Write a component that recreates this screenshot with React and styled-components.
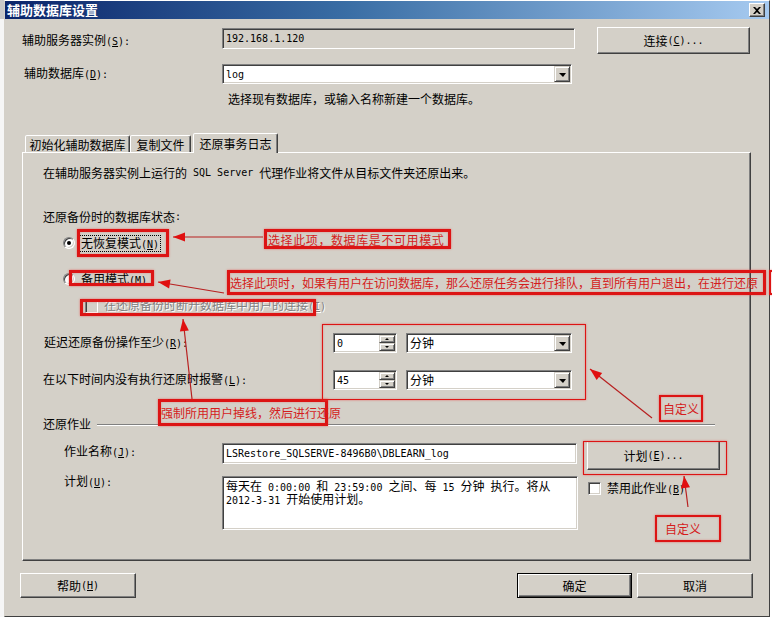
import React from "react";
import styled, { createGlobalStyle, css } from "styled-components";

const GlobalStyle = createGlobalStyle`
  html, body {
    margin: 0;
    padding: 0;
    background: #ffffff;
  }
`;

const FACE = "#d4d0c8";

const sunken = css`
  box-sizing: border-box;
  border: 1px solid;
  border-color: #808080 #ffffff #ffffff #808080;
  box-shadow: inset 1px 1px #404040, inset -1px -1px ${FACE};
`;

const raised = css`
  box-sizing: border-box;
  background: ${FACE};
  border: 1px solid;
  border-color: #ffffff #404040 #404040 #ffffff;
  box-shadow: inset -1px -1px #808080;
`;

const Page = styled.div`
  position: relative;
  width: 772px;
  height: 617px;
  overflow: hidden;
  display: flex;
  background: #ffffff;
`;

const BackStrip = styled.div`
  width: 4px;
  flex: none;
  background: linear-gradient(#c8c8c8 0 19px, #f6f6f6 19px);
`;

const Dialog = styled.div`
  width: 766px;
  height: 617px;
  flex: none;
  box-sizing: border-box;
  display: flex;
  flex-direction: column;
  background: ${FACE};
  border: 1px solid;
  border-color: #ffffff #404040 #404040 ${FACE};
  font-family: "Noto Sans CJK SC", "Liberation Sans", sans-serif;
  font-size: 12px;
  line-height: 14px;
  color: #000000;
`;

const TitleBar = styled.div`
  height: 18px;
  flex: none;
  display: flex;
  align-items: center;
  justify-content: space-between;
  padding: 0 4px 0 2px;
  background: linear-gradient(to right, #0a246a, #3a6ea5 45%, #a6caf0);
  color: #ffffff;
  font-weight: bold;
  font-size: 13px;
`;

const CloseBtn = styled.div`
  ${raised};
  width: 16px;
  height: 14px;
  display: flex;
  align-items: center;
  justify-content: center;
  box-shadow: inset -1px -1px #808080, inset 1px 1px ${FACE};
`;

const Body = styled.div`
  flex: 1;
  display: flex;
  flex-direction: column;
  padding: 0 16px 0 17px;
`;

const Row = styled.div`
  flex: none;
  display: flex;
  align-items: ${(p) => p.$align || "center"};
  height: ${(p) => p.$h}px;
  margin-top: ${(p) => p.$mt || 0}px;
  padding-left: ${(p) => p.$pl || 0}px;
  white-space: nowrap;
`;

const Label = styled.div`
  flex: none;
  box-sizing: border-box;
  width: ${(p) => p.$w}px;
  padding-left: ${(p) => p.$pl || 0}px;
  margin-top: ${(p) => p.$mt || 0}px;
  white-space: nowrap;
`;

const Field = styled.div`
  ${sunken};
  flex: none;
  display: flex;
  flex-direction: ${(p) => (p.$multi ? "column" : "row")};
  align-items: ${(p) => (p.$multi ? "flex-start" : "center")};
  align-self: ${(p) => p.$self || "auto"};
  width: ${(p) => p.$w}px;
  height: ${(p) => p.$h}px;
  margin-top: ${(p) => p.$mt || 0}px;
  margin-left: ${(p) => p.$ml || 0}px;
  padding: ${(p) => (p.$multi ? "2px 3px" : "1px 1px 1px 3px")};
  background: ${(p) => (p.$readonly ? FACE : "#ffffff")};
  line-height: 12px;
  white-space: nowrap;
`;

const FieldText = styled.div`
  flex: 1;
`;

const MemoLine = styled.div`
  height: 13px;
  line-height: 13px;
  white-space: nowrap;
`;

const DropBtn = styled.div`
  ${raised};
  flex: none;
  width: 16px;
  height: 16px;
  display: flex;
  align-items: center;
  justify-content: center;
  border-color: ${FACE} #404040 #404040 ${FACE};
  box-shadow: inset 1px 1px #ffffff, inset -1px -1px #808080;
  &::after {
    content: "";
    width: 0;
    height: 0;
    border-left: 4px solid transparent;
    border-right: 3px solid transparent;
    border-top: 4px solid #000000;
    margin-top: 1px;
  }
`;

const SpinCol = styled.div`
  flex: none;
  display: flex;
  flex-direction: column;
  width: 16px;
  height: 16px;
`;

const SpinBtn = styled.div`
  ${raised};
  height: 8px;
  display: flex;
  align-items: center;
  justify-content: center;
  border-color: ${FACE} #404040 #404040 ${FACE};
  box-shadow: inset 1px 1px #ffffff, inset -1px -1px #808080;
  &::after {
    content: "";
    width: 0;
    height: 0;
    border-left: 2px solid transparent;
    border-right: 2px solid transparent;
    ${(p) =>
      p.$up
        ? "border-bottom: 2px solid #000;"
        : "border-top: 2px solid #000;"}
  }
`;

const Button = styled.div`
  ${raised};
  flex: none;
  display: flex;
  align-items: center;
  justify-content: center;
  width: ${(p) => p.$w}px;
  height: ${(p) => p.$h}px;
  margin-left: ${(p) => p.$ml || 0}px;
  ${(p) =>
    p.$default &&
    css`
      border-color: #000000;
      box-shadow: inset 1px 1px #ffffff, inset -1px -1px #404040,
        inset -2px -2px #808080;
    `}
`;

const TabArea = styled.div`
  flex: none;
  width: 729px;
  margin-top: 27px;
  display: flex;
  flex-direction: column;
`;

const TabStrip = styled.div`
  display: flex;
  align-items: flex-end;
  height: 19px;
  padding-left: 3px;
`;

const Tab = styled.div`
  box-sizing: border-box;
  position: relative;
  z-index: ${(p) => (p.$active ? 1 : 0)};
  width: ${(p) => p.$w}px;
  height: ${(p) => (p.$active ? 20 : 17)}px;
  margin-left: ${(p) => p.$ml || 0}px;
  margin-bottom: ${(p) => (p.$active ? -1 : 0)}px;
  background: ${FACE};
  border: 1px solid;
  border-bottom: none;
  border-color: #ffffff #404040 transparent #ffffff;
  border-radius: 2px 2px 0 0;
  box-shadow: inset -1px 0 #808080;
  display: flex;
  align-items: center;
  justify-content: center;
  padding-top: ${(p) => (p.$active ? 0 : 1)}px;
`;

const Panel = styled.div`
  box-sizing: border-box;
  height: 409px;
  display: flex;
  flex-direction: column;
  padding-left: 20px;
  border: 1px solid;
  border-color: #ffffff #404040 #404040 #ffffff;
  box-shadow: inset -1px -1px #808080;
`;

const RadioDot = styled.span`
  ${sunken};
  flex: none;
  width: 12px;
  height: 12px;
  border-radius: 50%;
  background: #ffffff;
  display: flex;
  align-items: center;
  justify-content: center;
  ${(p) =>
    p.$checked &&
    css`
      &::after {
        content: "";
        width: 4px;
        height: 4px;
        border-radius: 50%;
        background: #000000;
      }
    `}
`;

const FocusLabel = styled.span`
  margin-left: 4px;
  padding: 0 1px;
  border: 1px dotted ${(p) => (p.$focus ? "#000000" : "transparent")};
  line-height: 13px;
`;

const CheckBox = styled.span`
  ${sunken};
  flex: none;
  width: 13px;
  height: 13px;
  margin-top: ${(p) => p.$mt || 0}px;
  margin-left: ${(p) => p.$ml || 0}px;
  background: ${(p) => (p.$disabled ? FACE : "#ffffff")};
`;

const CheckLabel = styled.span`
  margin-left: 6px;
  margin-top: ${(p) => p.$mt || 0}px;
  color: ${(p) => (p.$disabled ? "#808080" : "#000000")};
  text-shadow: ${(p) => (p.$disabled ? "1px 1px #ffffff" : "none")};
`;

const GroupLine = styled.div`
  flex: 1;
  height: 0;
  margin: 1px 35px 0 6px;
  border-top: 1px solid #808080;
  border-bottom: 1px solid #ffffff;
`;

const Footer = styled.div`
  flex: none;
  display: flex;
  align-items: center;
  height: 25px;
  margin: 12px 0 0 -2px;
`;

const Spacer = styled.div`
  flex: 1;
`;

const Latin = styled.span`
  font-family: "DejaVu Sans Mono", "Liberation Mono", monospace;
  font-size: 10px;
  white-space: pre;
`;

// annotation layer drawn over the dialog
const Mark = styled.div`
  position: absolute;
  left: ${(p) => p.$x}px;
  top: ${(p) => p.$y}px;
  width: ${(p) => p.$w}px;
  height: ${(p) => p.$h}px;
  box-sizing: border-box;
  border: ${(p) => p.$t}px solid #dc1414;
  box-shadow: 0 0 2px rgba(240, 70, 70, 0.7), inset 0 0 2px rgba(240, 70, 70, 0.5);
  display: flex;
  align-items: center;
  padding-left: ${(p) => p.$pad || 0}px;
  color: #d41c1c;
  font-family: "Noto Sans CJK SC", sans-serif;
  font-size: 12px;
  letter-spacing: ${(p) => p.$ls || 0}px;
  white-space: nowrap;
  pointer-events: none;
`;

const Arrows = styled.svg`
  position: absolute;
  left: 0;
  top: 0;
  pointer-events: none;
`;

const renderText = (s) =>
  s
    .split(/([\x20-\x7e]+)/)
    .filter(Boolean)
    .map((part, i) => {
      if (!/^[\x20-\x7e]+$/.test(part)) return part;
      const bits = part.split(/&(.)/);
      return (
        <Latin key={i}>
          {bits.map((b, j) => (j % 2 ? <u key={j}>{b}</u> : b))}
        </Latin>
      );
    });

const T = ({ children }) => <>{renderText(children)}</>;

const Combo = ({ w, value, ml }) => (
  <Field $w={w} $h={20} $ml={ml}>
    <FieldText>
      <T>{value}</T>
    </FieldText>
    <DropBtn />
  </Field>
);

const Spinner = ({ value }) => (
  <Field $w={64} $h={20}>
    <FieldText>
      <T>{value}</T>
    </FieldText>
    <SpinCol>
      <SpinBtn $up />
      <SpinBtn />
    </SpinCol>
  </Field>
);

const marks = [
  { x: 77, y: 229, w: 92, h: 28, t: 3 },
  { x: 264, y: 229, w: 187, h: 20, t: 3, pad: 1, ls: 0.6, text: "选择此项，数据库是不可用模式" },
  { x: 69, y: 270, w: 85, h: 16, t: 3 },
  {
    x: 227, y: 270, w: 539, h: 25, t: 3, pad: 0,
    text: "选择此项时，如果有用户在访问数据库，那么还原任务会进行排队，直到所有用户退出，在进行还原",
  },
  { x: 769, y: 270, w: 8, h: 25, t: 2 },
  { x: 80, y: 299, w: 236, h: 17, t: 3 },
  { x: 158, y: 399, w: 170, h: 27, t: 3, pad: 0, text: "强制所用用户掉线，然后进行还原" },
  { x: 322, y: 324, w: 264, h: 76, t: 1 },
  { x: 659, y: 395, w: 44, h: 27, t: 2, pad: 2, text: "自定义" },
  { x: 583, y: 441, w: 144, h: 34, t: 1 },
  { x: 655, y: 515, w: 66, h: 27, t: 2, pad: 8, text: "自定义" },
];

const arrows = [
  [263, 237, 173, 237],
  [224, 293, 158, 282],
  [192, 399, 183, 319],
  [652, 418, 590, 369],
  [688, 507, 684, 476],
];

const head = (x1, y1, x2, y2, len = 12, half = 4.5) => {
  const d = Math.hypot(x2 - x1, y2 - y1);
  const ux = (x2 - x1) / d;
  const uy = (y2 - y1) / d;
  const bx = x2 - ux * len;
  const by = y2 - uy * len;
  return `${x2},${y2} ${bx - uy * half},${by + ux * half} ${bx + uy * half},${by - ux * half}`;
};

export default function App() {
  return (
    <Page>
      <GlobalStyle />
      <BackStrip />
      <Dialog>
        <TitleBar>
          <span>辅助数据库设置</span>
          <CloseBtn>
            <svg width="8" height="7" viewBox="0 0 8 7">
              <path d="M0 0h2l2 2 2-2h2L5 3.5 8 7H6L4 5 2 7H0l3-3.5z" fill="#000" />
            </svg>
          </CloseBtn>
        </TitleBar>
        <Body>
          <Row $h={27} $mt={8}>
            <Label $w={200}>
              <T>辅助服务器实例(&S):</T>
            </Label>
            <Field $w={353} $h={21} $readonly $mt={1} $self="flex-start">
              <T>192.168.1.120</T>
            </Field>
            <Button $w={153} $h={27} $ml={22}>
              <T>连接(&C)...</T>
            </Button>
          </Row>
          <Row $h={20} $mt={10}>
            <Label $w={200} $pl={2}>
              <T>辅助数据库(&D):</T>
            </Label>
            <Combo w={350} value="log" />
          </Row>
          <Row $h={14} $mt={8} $pl={206}>
            选择现有数据库，或输入名称新建一个数据库。
          </Row>

          <TabArea>
            <TabStrip>
              <Tab $w={105}>初始化辅助数据库</Tab>
              <Tab $w={61}>复制文件</Tab>
              <Tab $w={85} $ml={2} $active>
                还原事务日志
              </Tab>
            </TabStrip>
            <Panel>
              <Row $h={14} $mt={13}>
                <T>在辅助服务器实例上运行的 SQL Server 代理作业将文件从目标文件夹还原出来。</T>
              </Row>
              <Row $h={14} $mt={30}>
                <T>还原备份时的数据库状态:</T>
              </Row>
              <Row $h={20} $mt={9} $pl={20}>
                <RadioDot $checked />
                <FocusLabel $focus>
                  <T>无恢复模式(&N)</T>
                </FocusLabel>
              </Row>
              <Row $h={20} $mt={16} $pl={20}>
                <RadioDot />
                <FocusLabel>
                  <T>备用模式(&M)</T>
                </FocusLabel>
              </Row>
              <Row $h={16} $mt={9} $pl={42}>
                <CheckBox $disabled />
                <CheckLabel $disabled>
                  <T>在还原备份时断开数据库中用户的连接(&I)</T>
                </CheckLabel>
              </Row>
              <Row $h={20} $mt={19}>
                <Label $w={290} $pl={1}>
                  <T>延迟还原备份操作至少(&R):</T>
                </Label>
                <Spinner value="0" />
                <Combo w={166} ml={9} value="分钟" />
              </Row>
              <Row $h={20} $mt={17}>
                <Label $w={290}>
                  <T>在以下时间内没有执行还原时报警(&L):</T>
                </Label>
                <Spinner value="45" />
                <Combo w={166} ml={9} value="分钟" />
              </Row>
              <Row $h={14} $mt={27}>
                还原作业
                <GroupLine />
              </Row>
              <Row $h={29} $mt={10} $align="flex-start">
                <Label $w={179} $pl={21} $mt={3}>
                  <T>作业名称(&J):</T>
                </Label>
                <Field $w={355} $h={21} $mt={2}>
                  <T>LSRestore_SQLSERVE-8496B0\DBLEARN_log</T>
                </Field>
                <Button $w={133} $h={29} $ml={10}>
                  <T>计划(&E)...</T>
                </Button>
              </Row>
              <Row $h={54} $mt={6} $align="flex-start">
                <Label $w={179} $pl={21} $mt={-2}>
                  <T>计划(&U):</T>
                </Label>
                <Field $w={356} $h={54} $multi>
                  <MemoLine>
                    <T>每天在 0:00:00 和 23:59:00 之间、每 15 分钟 执行。将从</T>
                  </MemoLine>
                  <MemoLine>
                    <T>2012-3-31 开始使用计划。</T>
                  </MemoLine>
                </Field>
                <CheckBox $ml={10} $mt={6} />
                <CheckLabel $mt={5}>
                  <T>禁用此作业(&B)</T>
                </CheckLabel>
              </Row>
            </Panel>
          </TabArea>

          <Footer>
            <Button $w={116} $h={25}>
              <T>帮助(&H)</T>
            </Button>
            <Spacer />
            <Button $w={115} $h={25} $default>
              确定
            </Button>
            <Button $w={116} $h={25} $ml={5}>
              取消
            </Button>
          </Footer>
        </Body>
      </Dialog>

      {marks.map((m, i) => (
        <Mark key={i} $x={m.x} $y={m.y} $w={m.w} $h={m.h} $t={m.t} $pad={m.pad} $ls={m.ls}>
          {m.text}
        </Mark>
      ))}
      <Arrows width="772" height="617" viewBox="0 0 772 617">
        {arrows.map(([x1, y1, x2, y2], i) => (
          <g key={i}>
            <line x1={x1} y1={y1} x2={x2} y2={y2} stroke="#b82020" strokeWidth="1.2" />
            <polygon points={head(x1, y1, x2, y2)} fill="#e01010" />
          </g>
        ))}
      </Arrows>
    </Page>
  );
}
